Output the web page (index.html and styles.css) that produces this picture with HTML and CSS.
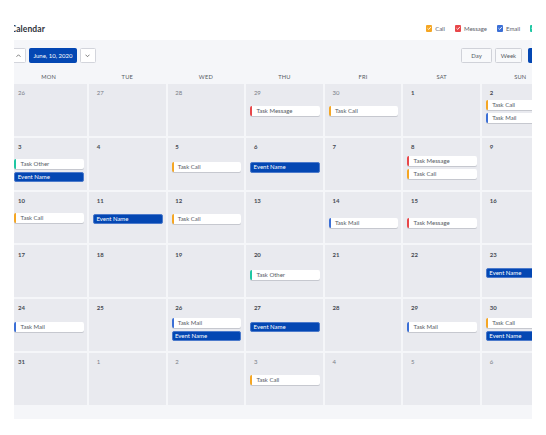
FILE: index.html
```html
<!DOCTYPE html>
<html>
<head>
<meta charset="utf-8">
<title>Calendar</title>
<link rel="stylesheet" href="styles.css">
</head>
<body>
<div class="viewport">
  <div class="page">
    <header class="topbar">
      <h1 class="title">Calendar</h1>
      <ul class="legend">
        <li class="legend-item"><span class="check call"><svg viewBox="0 0 6 6" width="6.3" height="6.3"><path d="M1.4 3.1 L2.6 4.2 L4.7 1.8" fill="none" stroke="#fff" stroke-width="0.8"/></svg></span>Call</li>
        <li class="legend-item"><span class="check message"><svg viewBox="0 0 6 6" width="6.3" height="6.3"><path d="M1.4 3.1 L2.6 4.2 L4.7 1.8" fill="none" stroke="#fff" stroke-width="0.8"/></svg></span>Message</li>
        <li class="legend-item"><span class="check mail"><svg viewBox="0 0 6 6" width="6.3" height="6.3"><path d="M1.4 3.1 L2.6 4.2 L4.7 1.8" fill="none" stroke="#fff" stroke-width="0.8"/></svg></span>Email</li>
        <li class="legend-item"><span class="check other"><svg viewBox="0 0 6 6" width="6.3" height="6.3"><path d="M1.4 3.1 L2.6 4.2 L4.7 1.8" fill="none" stroke="#fff" stroke-width="0.8"/></svg></span>Other</li>
      </ul>
    </header>

    <section class="panel">
      <div class="toolbar">
        <div class="nav">
          <button class="btn icon-btn" aria-label="Previous"><svg viewBox="0 0 6 4" width="5" height="3.4"><path d="M0.6 3.3 L3 0.9 L5.4 3.3" fill="none" stroke="#555" stroke-width="0.9"/></svg></button>
          <button class="btn date-btn">June, 10, 2020</button>
          <button class="btn icon-btn" aria-label="Next"><svg viewBox="0 0 6 4" width="5" height="3.4"><path d="M0.6 0.8 L3 3.2 L5.4 0.8" fill="none" stroke="#555" stroke-width="0.9"/></svg></button>
        </div>
        <div class="views">
          <button class="btn view-btn day">Day</button>
          <button class="btn view-btn week">Week</button>
          <button class="btn view-btn month active">Month</button>
        </div>
      </div>

      <div class="weekdays">
        <span>MON</span><span>TUE</span><span>WED</span><span>THU</span><span>FRI</span><span>SAT</span><span>SUN</span>
      </div>

      <div class="grid">
        <!-- row 1 -->
        <div class="cell"><span class="num muted">26</span></div>
        <div class="cell"><span class="num muted">27</span></div>
        <div class="cell"><span class="num muted">28</span></div>
        <div class="cell"><span class="num muted">29</span>
          <div class="items"><div class="card message">Task Message</div></div></div>
        <div class="cell"><span class="num muted">30</span>
          <div class="items"><div class="card call">Task Call</div></div></div>
        <div class="cell"><span class="num">1</span></div>
        <div class="cell"><span class="num">2</span>
          <div class="items o16"><div class="card call">Task Call</div><div class="card mail">Task Mail</div></div></div>

        <!-- row 2 -->
        <div class="cell"><span class="num">3</span>
          <div class="items o21"><div class="card other">Task Other</div><div class="event">Event Name</div></div></div>
        <div class="cell"><span class="num">4</span></div>
        <div class="cell"><span class="num">5</span>
          <div class="items o24"><div class="card call">Task Call</div></div></div>
        <div class="cell"><span class="num">6</span>
          <div class="items o24"><div class="event">Event Name</div></div></div>
        <div class="cell"><span class="num">7</span></div>
        <div class="cell"><span class="num">8</span>
          <div class="items o18"><div class="card message">Task Message</div><div class="card call">Task Call</div></div></div>
        <div class="cell"><span class="num">9</span></div>

        <!-- row 3 -->
        <div class="cell"><span class="num">10</span>
          <div class="items o21"><div class="card call">Task Call</div></div></div>
        <div class="cell"><span class="num">11</span>
          <div class="items"><div class="event">Event Name</div></div></div>
        <div class="cell"><span class="num">12</span>
          <div class="items"><div class="card call">Task Call</div></div></div>
        <div class="cell"><span class="num">13</span></div>
        <div class="cell"><span class="num">14</span>
          <div class="items o26"><div class="card mail">Task Mail</div></div></div>
        <div class="cell"><span class="num">15</span>
          <div class="items o26"><div class="card message">Task Message</div></div></div>
        <div class="cell"><span class="num">16</span></div>

        <!-- row 4 -->
        <div class="cell"><span class="num">17</span></div>
        <div class="cell"><span class="num">18</span></div>
        <div class="cell"><span class="num">19</span></div>
        <div class="cell"><span class="num">20</span>
          <div class="items o24"><div class="card other">Task Other</div></div></div>
        <div class="cell"><span class="num">21</span></div>
        <div class="cell"><span class="num">22</span></div>
        <div class="cell"><span class="num">23</span>
          <div class="items"><div class="event">Event Name</div></div></div>

        <!-- row 5 -->
        <div class="cell"><span class="num">24</span>
          <div class="items"><div class="card mail">Task Mail</div></div></div>
        <div class="cell"><span class="num">25</span></div>
        <div class="cell"><span class="num">26</span>
          <div class="items o18"><div class="card mail">Task Mail</div><div class="event">Event Name</div></div></div>
        <div class="cell"><span class="num">27</span>
          <div class="items"><div class="event">Event Name</div></div></div>
        <div class="cell"><span class="num">28</span></div>
        <div class="cell"><span class="num">29</span>
          <div class="items"><div class="card mail">Task Mail</div></div></div>
        <div class="cell"><span class="num">30</span>
          <div class="items o18"><div class="card call">Task Call</div><div class="event">Event Name</div></div></div>

        <!-- row 6 -->
        <div class="cell"><span class="num">31</span></div>
        <div class="cell"><span class="num muted">1</span></div>
        <div class="cell"><span class="num muted">2</span></div>
        <div class="cell"><span class="num muted">3</span>
          <div class="items"><div class="card call">Task Call</div></div></div>
        <div class="cell"><span class="num muted">4</span></div>
        <div class="cell"><span class="num muted">5</span></div>
        <div class="cell"><span class="num muted">6</span></div>
      </div>
    </section>
  </div>
</div>
</body>
</html>
```

FILE: styles.css
```css
* {
  box-sizing: border-box;
  margin: 0;
  padding: 0;
}

body {
  margin: 0;
  background: #ffffff;
  font-family: Lato, "Noto Sans", "Liberation Sans", sans-serif;
  color: #555a63;
}

.viewport {
  margin-left: 14px;
  width: 518px;
  overflow: hidden;
}

.page {
  width: 548.2px;
  margin-left: -3.6px;
}

/* header */
.topbar {
  height: 40px;
  padding-top: 17px;
  display: flex;
  align-items: center;
  justify-content: space-between;
}

.title {
  font-size: 8.5px;
  font-weight: 700;
  color: #2f333b;
  letter-spacing: 0.1px;
}

.legend {
  list-style: none;
  display: flex;
  align-items: center;
  gap: 10px;
  padding-right: 3.8px;
}

.legend-item {
  display: flex;
  align-items: center;
  gap: 2.7px;
  font-size: 6px;
  color: #5b606a;
}

.check {
  width: 6.3px;
  height: 6.3px;
  border-radius: 1px;
  display: flex;
}

.check.call { background: #f5a623; }
.check.message { background: #e8474a; }
.check.mail { background: #3b6fd6; }
.check.other { background: #1fc7a3; }

/* panel */
.panel {
  background: #f5f6f9;
  padding: 8px 0 14.5px;
  border-radius: 3px;
}

.toolbar {
  display: flex;
  justify-content: space-between;
  align-items: center;
  height: 15px;
}

.nav,
.views {
  display: flex;
  align-items: center;
}

.btn {
  height: 15px;
  border: 1px solid #d3d5dc;
  background: #ffffff;
  font-family: inherit;
  font-size: 6px;
  color: #555a63;
  border-radius: 1.5px;
  display: flex;
  align-items: center;
  justify-content: center;
}

.icon-btn {
  width: 15.6px;
}

.date-btn {
  width: 48px;
  margin: 0 3px;
  background: #0447b3;
  border-color: #0447b3;
  color: #ffffff;
}

.view-btn {
  background: #f8f9fb;
  border-color: #d0d2d9;
}

.view-btn.day { width: 31px; }
.view-btn.week { width: 27px; margin-left: 3px; }
.view-btn.month {
  width: 30.6px;
  margin-left: 6px;
}
.view-btn.active {
  background: #0447b3;
  border-color: #0447b3;
  color: #ffffff;
}

/* weekday header */
.weekdays {
  display: grid;
  grid-template-columns: repeat(7, 76.6px);
  column-gap: 2px;
  margin-top: 7px;
  height: 14px;
  line-height: 14px;
  text-align: center;
  font-size: 5.7px;
  color: #555a63;
  letter-spacing: 0.2px;
}

/* month grid */
.grid {
  display: grid;
  grid-template-columns: repeat(7, 76.6px);
  grid-auto-rows: 51.8px;
  gap: 2px;
}

.cell {
  background: #e9eaef;
  padding: 0 3px 0 4px;
  display: flex;
  flex-direction: column;
  overflow: hidden;
}

.num {
  display: block;
  height: 13.3px;
  padding-top: 5.3px;
  padding-left: 3.7px;
  line-height: 8px;
  font-size: 6px;
  font-weight: 700;
  color: #474b53;
}

.num.muted {
  font-weight: 400;
  color: #7a7e87;
}

.items {
  display: flex;
  flex-direction: column;
  gap: 3px;
  margin-top: 9.2px;
}

.items.o16 { margin-top: 2.7px; }
.items.o18 { margin-top: 5.4px; }
.items.o21 { margin-top: 7.7px; }
.items.o24 { margin-top: 11.3px; }
.items.o26 { margin-top: 12.7px; }

.card {
  height: 10px;
  line-height: 10px;
  font-size: 6px;
  background: #ffffff;
  border-left: 2.5px solid #999;
  border-radius: 2px;
  padding-left: 4.2px;
  box-shadow: 0 1px 0 #c6c8cf;
  color: #555a63;
  white-space: nowrap;
  overflow: hidden;
}

.card.call { border-left-color: #f5a623; }
.card.message { border-left-color: #e8474a; }
.card.mail { border-left-color: #3b6fd6; }
.card.other { border-left-color: #1fc7a3; }

.event {
  height: 10.3px;
  line-height: 8.3px;
  font-size: 6px;
  background: #0447b3;
  border: 1px solid #4c7acb;
  border-radius: 2px;
  color: #ffffff;
  padding-left: 2.4px;
  white-space: nowrap;
  overflow: hidden;
}
```
